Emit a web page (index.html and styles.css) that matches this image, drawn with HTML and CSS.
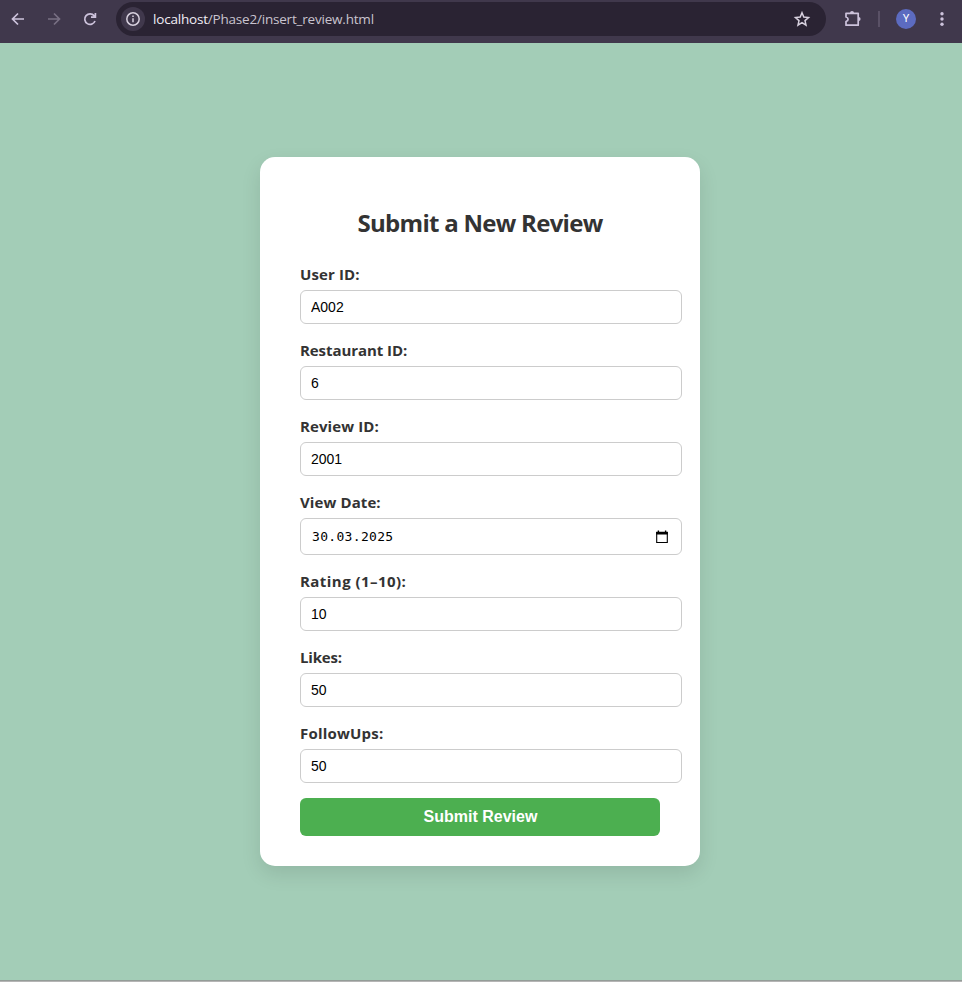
FILE: index.html
```html
<!DOCTYPE html>
<html lang="en">
<head>
<meta charset="utf-8">
<title>Submit a New Review</title>
<link rel="stylesheet" href="styles.css">
</head>
<body>
<header class="toolbar">
  <svg class="icon back" width="20" height="20" viewBox="0 0 20 20"><path d="M16 10H5M10 4.500 4.500 10l5.500 5.500"/></svg>
  <svg class="icon forward" width="20" height="20" viewBox="0 0 20 20"><path d="M4 10h11M10 4.500 15.500 10 10 15.500"/></svg>
  <svg class="icon reload" width="20" height="20" viewBox="0 0 20 20"><path d="M15 12a5.300 5.300 0 1 1-.8-5.200L15.400 8M15.400 4v4.200h-4.400"/></svg>
  <div class="address">
    <span class="info"><svg class="icon" width="16" height="16" viewBox="0 0 16 16"><circle cx="8" cy="8" r="6.200"/><path d="M8 7.200v4M8 4.500v1.500"/></svg></span>
    <span class="url"><span class="host">localhost</span>/Phase2/insert_review.html</span>
    <svg class="icon star" width="18" height="18" viewBox="0 0 18 18"><path d="M9 2.800l1.800 4.300 4.700.4-3.500 3.100 1 4.600-4-2.500-4 2.500 1-4.600-3.500-3.100 4.700-.4z"/></svg>
  </div>
  <svg class="icon puzzle" width="20" height="20" viewBox="0 0 20 20"><path stroke-linejoin="round" d="M4 4.300h12.200v11.900H4v-3.700c2.800-.8 2.800-3.700 0-4.500z"/><path class="solid" d="M8 4a2 2 0 0 1 4 0zM16.600 8.100a2 2 0 0 1 0 4z"/></svg>
  <span class="divider"></span>
  <span class="avatar">Y</span>
  <svg class="dots" width="20" height="20" viewBox="0 0 20 20"><circle cx="10" cy="4.700" r="1.700"/><circle cx="10" cy="10" r="1.700"/><circle cx="10" cy="15.300" r="1.700"/></svg>
</header>
<main class="page">
  <form class="card">
    <h2 class="title">Submit a New Review</h2>
    <label class="label l-user" for="user">User ID:</label>
    <input class="field" id="user" type="text" value="A002">
    <label class="label l-rest" for="rest">Restaurant ID:</label>
    <input class="field" id="rest" type="text" value="6">
    <label class="label l-rev" for="rev">Review ID:</label>
    <input class="field" id="rev" type="text" value="2001">
    <label class="label l-date">View Date:</label>
    <div class="field date"><span class="value">30.03.2025</span>
      <svg width="14" height="14" viewBox="0 0 14 14"><path d="M1.700 2.500h10.600v10H1.700z" fill="none" stroke="#000" stroke-width="1.100"/><path d="M1.200 1.800h11.600v2.700H1.200zM2.700.5h1.400V2H2.700zM9.900.5h1.400V2H9.900z"/></svg>
    </div>
    <label class="label l-rate" for="rate">Rating (1–10):</label>
    <input class="field" id="rate" type="text" value="10">
    <label class="label l-likes" for="likes">Likes:</label>
    <input class="field" id="likes" type="text" value="50">
    <label class="label l-follow" for="follow">FollowUps:</label>
    <input class="field" id="follow" type="text" value="50">
    <button class="submit" type="button">Submit Review</button>
  </form>
</main>
<footer class="edge"></footer>
</body>
</html>
```
FILE: styles.css
```css
* { box-sizing: border-box; }
body {
  margin: 0;
  height: 982px;
  display: flex;
  flex-direction: column;
  overflow: hidden;
  background: #a3cdb7;
  font-family: "Open Sans", sans-serif;
}
.toolbar {
  height: 43px;
  flex: none;
  display: flex;
  align-items: center;
  padding: 0 10px 5px 8px;
  background: #40384c;
}
.icon { fill: none; stroke: #cdc3dc; stroke-width: 1.7; flex: none; }
.forward { margin-left: 16px; stroke: #787083; }
.reload { margin-left: 16px; }
.address {
  display: flex;
  align-items: center;
  width: 710px;
  height: 34px;
  margin-left: 16px;
  padding: 0 15px 0 5px;
  border-radius: 17px;
  background: #2a2333;
}
.info {
  width: 24px;
  height: 24px;
  border-radius: 50%;
  background: #40384c;
  display: flex;
  align-items: center;
  justify-content: center;
}
.info .icon { stroke: #d8d1df; stroke-width: 1.5; }
.url {
  margin-left: 8px;
  font-size: 13.5px;
  line-height: 20px;
  letter-spacing: -.2px;
  color: #c9c3cf;
  white-space: nowrap;
}
.host { color: #f1edf5; }
.star { margin-left: auto; stroke: #d8d1df; stroke-width: 1.5; }
.puzzle { margin-left: 16px; }
.solid { fill: #cdc3dc; stroke: none; }
.divider { width: 2px; height: 16px; margin-left: 16px; background: #5a5166; }
.avatar {
  width: 20px;
  height: 20px;
  margin-left: 16px;
  border-radius: 50%;
  background: #5c6bc0;
  color: #fff;
  font: 400 11px/20px Roboto, sans-serif;
  text-align: center;
}
.dots { margin-left: auto; fill: #cdc3dc; }
.page {
  flex: 1;
  padding-top: 114px;
}
.card {
  width: 440px;
  height: 709px;
  margin-left: 260px;
  padding: 49px 40px 30px;
  border-radius: 15px;
  background: #fff;
  box-shadow: 0 8px 20px rgba(0, 0, 0, .1);
}
.title {
  margin: 0 0 24px;
  font-size: 24px;
  line-height: 33px;
  font-weight: 700;
  letter-spacing: -.72px;
  color: #333;
  text-align: center;
  white-space: nowrap;
}
.label {
  display: block;
  height: 27px;
  font-size: 15px;
  line-height: 22px;
  font-weight: 700;
  color: #333;
}
.l-user { letter-spacing: .12px; }
.l-rest { letter-spacing: -.07px; }
.l-rev, .l-date { letter-spacing: .1px; }
.l-rate { letter-spacing: .45px; }
.l-likes { letter-spacing: -.18px; }
.l-follow { letter-spacing: .2px; }
.field {
  display: block;
  width: 382px;
  height: 34px;
  margin: 0 0 15px;
  padding: 0 10px;
  border: 1px solid #ccc;
  border-radius: 6px;
  background: #fff;
  color: #000;
  font: 14px "Liberation Sans", Arial, sans-serif;
}
.date {
  height: 37px;
  display: flex;
  align-items: center;
  justify-content: space-between;
  padding: 0 12px 0 11px;
  font: 13px "DejaVu Sans Mono", monospace;
}
.value { letter-spacing: .32px; padding-bottom: 1px; }
.submit {
  display: block;
  width: 360px;
  height: 38px;
  padding: 0 0 0 1px;
  border: 0;
  border-radius: 6px;
  background: #4caf50;
  color: #fff;
  font: bold 16px "Liberation Sans", Arial, sans-serif;
}
.edge { height: 2px; flex: none; background: #b5b5b5; border-top: 1px solid #949c98; }
```
